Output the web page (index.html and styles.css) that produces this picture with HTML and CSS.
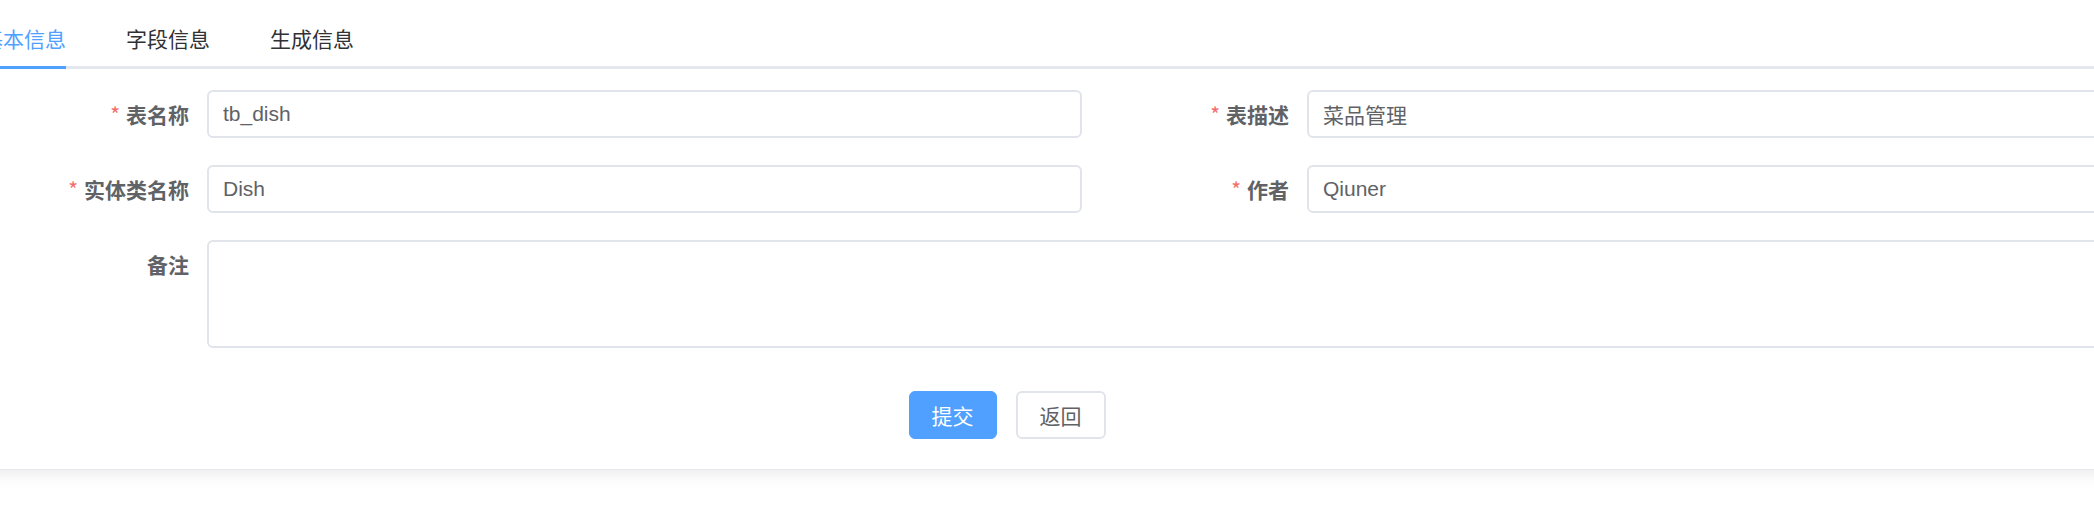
FILE: index.html
```html
<!DOCTYPE html>
<html lang="zh-CN">
<head>
<meta charset="utf-8">
<title>修改生成配置</title>
<link rel="stylesheet" href="styles.css">
</head>
<body>
<div class="card">
  <div class="tabs-header">
    <div class="tabs-nav">
      <div class="tab tab-first is-active"><span class="tab-text">基本信息</span></div>
      <div class="tab"><span class="tab-text">字段信息</span></div>
      <div class="tab tab-last"><span class="tab-text">生成信息</span></div>
    </div>
  </div>

  <form class="form">
    <div class="form-grid">
      <div class="form-item">
        <label class="form-label"><span class="req">*</span>表名称</label>
        <div class="form-content"><input class="input" type="text" value="tb_dish"></div>
      </div>
      <div class="form-item">
        <label class="form-label"><span class="req">*</span>表描述</label>
        <div class="form-content"><input class="input" type="text" value="菜品管理"></div>
      </div>
      <div class="form-item">
        <label class="form-label"><span class="req">*</span>实体类名称</label>
        <div class="form-content"><input class="input" type="text" value="Dish"></div>
      </div>
      <div class="form-item">
        <label class="form-label"><span class="req">*</span>作者</label>
        <div class="form-content"><input class="input" type="text" value="Qiuner"></div>
      </div>
      <div class="form-item form-item-full">
        <label class="form-label">备注</label>
        <div class="form-content"><textarea class="textarea"></textarea></div>
      </div>
    </div>
  </form>

  <div class="btn-row">
    <button class="btn btn-primary" type="button">提交</button>
    <button class="btn btn-default" type="button">返回</button>
  </div>
</div>
</body>
</html>
```

FILE: styles.css
```css
* {
  box-sizing: border-box;
}

html, body {
  margin: 0;
  padding: 0;
  background: #ffffff;
  overflow: hidden;
  height: 530px;
}

body {
  font-family: "Liberation Sans", "Noto Sans CJK SC", sans-serif;
  color: #606266;
}

.card {
  margin: -22px 0 0 -49px;
  width: 2262px;
  padding: 30px 30px 30px 30px;
  background: #ffffff;
  border: 1px solid #e6e8ee;
  border-radius: 6px;
  box-shadow: 0 3px 18px 0 rgba(0, 0, 0, 0.09);
}

/* Tabs */
.tabs-header {
  margin-bottom: 21px;
}

.tabs-nav {
  position: relative;
  display: flex;
  height: 60px;
}

.tabs-nav::after {
  content: "";
  position: absolute;
  left: 0;
  right: 0;
  bottom: 0;
  height: 3px;
  background: #e4e7ed;
}

.tab {
  height: 60px;
  line-height: 58px;
  padding: 0 30px;
  font-size: 21px;
  color: #303133;
  font-family: "Noto Sans CJK SC", sans-serif;
}

.tab-first {
  padding-left: 0;
}

.tab-last {
  padding-right: 0;
}

.tab-text {
  position: relative;
  display: inline-block;
  height: 60px;
}

.tab.is-active {
  color: #4fa0ff;
}

.tab.is-active .tab-text::after {
  content: "";
  position: absolute;
  left: 0;
  right: 0;
  bottom: 0;
  height: 3px;
  background: #4fa0ff;
  z-index: 1;
}

/* Form */
.form-grid {
  display: grid;
  grid-template-columns: 1100px 1100px;
}

.form-item {
  display: flex;
  align-items: flex-start;
  margin-bottom: 27px;
}

.form-item-full {
  grid-column: 1 / span 2;
}

.form-label {
  flex: 0 0 225px;
  height: 48px;
  padding-right: 18px;
  text-align: right;
  line-height: 48px;
  font-size: 21px;
  font-weight: 700;
  color: #606266;
  font-family: "Noto Sans CJK SC", sans-serif;
  white-space: nowrap;
}

.req {
  color: #f56c6c;
  margin-right: 6px;
  font-weight: 400;
}

.form-content {
  flex: 1;
  min-width: 0;
}

.input {
  display: block;
  width: 100%;
  height: 48px;
  padding: 0 15px 0 14px;
  border: 2px solid #e1e4ea;
  border-radius: 6px;
  font-family: "Liberation Sans", "Noto Sans CJK SC", sans-serif;
  font-size: 21px;
  color: #606266;
  background: #ffffff;
  outline: none;
}

.textarea {
  display: block;
  width: 100%;
  height: 108px;
  padding: 8px 15px;
  border: 2px solid #e1e4ea;
  border-radius: 6px;
  font-family: "Liberation Sans", "Noto Sans CJK SC", sans-serif;
  font-size: 21px;
  color: #606266;
  background: #ffffff;
  resize: none;
  outline: none;
}

/* Buttons */
.btn-row {
  display: flex;
  justify-content: center;
  gap: 19px;
  margin: 16px 0 0 -150px;
}

.btn {
  height: 48px;
  padding: 0 22px;
  border-radius: 6px;
  font-family: "Noto Sans CJK SC", sans-serif;
  font-size: 21px;
  line-height: 1;
  cursor: pointer;
}

.btn-primary {
  background: #4fa0ff;
  border: 1px solid #4fa0ff;
  color: #ffffff;
}

.btn-default {
  background: #ffffff;
  border: 2px solid #e1e4ea;
  color: #606266;
}
```
